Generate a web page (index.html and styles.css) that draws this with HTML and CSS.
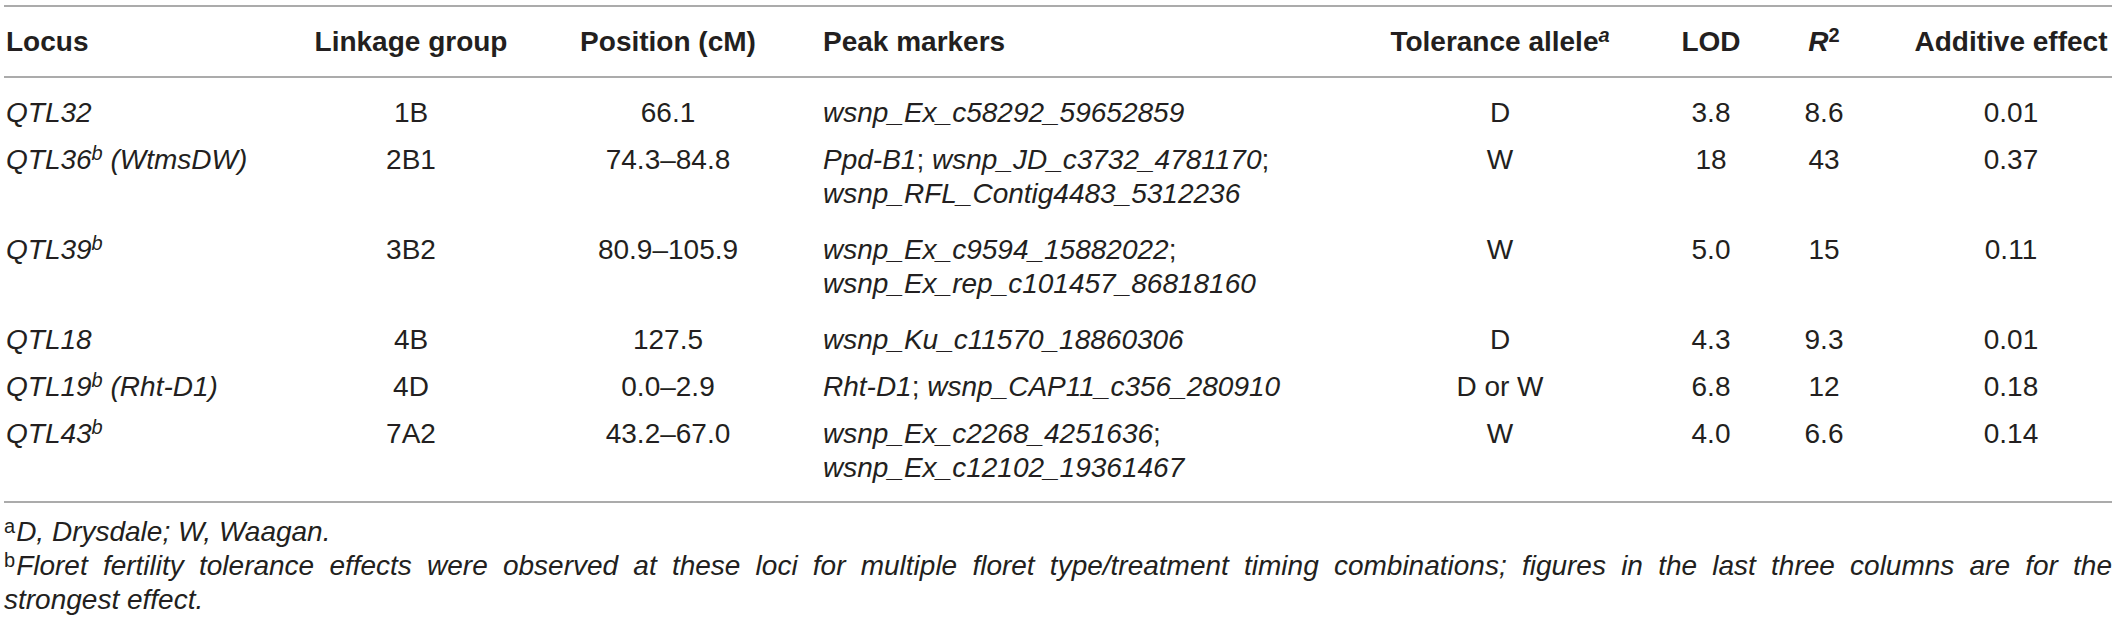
FILE: index.html
```html
<!DOCTYPE html>
<html lang="en">
<head>
<meta charset="utf-8">
<title>QTL table</title>
<link rel="stylesheet" href="styles.css">
</head>
<body>
<div class="page">
  <table class="qtl-table">
    <colgroup>
      <col class="c-locus">
      <col class="c-link">
      <col class="c-pos">
      <col class="c-peak">
      <col class="c-tol">
      <col class="c-lod">
      <col class="c-r2">
      <col class="c-add">
    </colgroup>
    <thead>
      <tr>
        <th class="left">Locus</th>
        <th>Linkage group</th>
        <th>Position (cM)</th>
        <th class="left peak">Peak markers</th>
        <th>Tolerance allele<sup class="sup it">a</sup></th>
        <th class="lod">LOD</th>
        <th class="r2"><span class="it">R</span><sup class="sup">2</sup></th>
        <th>Additive effect</th>
      </tr>
    </thead>
    <tbody>
      <tr>
        <td class="left it">QTL32</td>
        <td>1B</td>
        <td>66.1</td>
        <td class="left peak it">wsnp_Ex_c58292_59652859</td>
        <td>D</td>
        <td class="lod">3.8</td>
        <td class="r2">8.6</td>
        <td>0.01</td>
      </tr>
      <tr class="tall">
        <td class="left it">QTL36<sup class="sup">b</sup> (WtmsDW)</td>
        <td>2B1</td>
        <td>74.3–84.8</td>
        <td class="left peak it">Ppd-B1<span class="up">;</span> wsnp_JD_c3732_4781170<span class="up">;</span> wsnp_RFL_Contig4483_5312236</td>
        <td>W</td>
        <td class="lod">18</td>
        <td class="r2">43</td>
        <td>0.37</td>
      </tr>
      <tr class="tall">
        <td class="left it">QTL39<sup class="sup">b</sup></td>
        <td>3B2</td>
        <td>80.9–105.9</td>
        <td class="left peak it">wsnp_Ex_c9594_15882022<span class="up">;</span> wsnp_Ex_rep_c101457_86818160</td>
        <td>W</td>
        <td class="lod">5.0</td>
        <td class="r2">15</td>
        <td>0.11</td>
      </tr>
      <tr>
        <td class="left it">QTL18</td>
        <td>4B</td>
        <td>127.5</td>
        <td class="left peak it">wsnp_Ku_c11570_18860306</td>
        <td>D</td>
        <td class="lod">4.3</td>
        <td class="r2">9.3</td>
        <td>0.01</td>
      </tr>
      <tr>
        <td class="left it">QTL19<sup class="sup">b</sup> (Rht-D1)</td>
        <td>4D</td>
        <td>0.0–2.9</td>
        <td class="left peak it">Rht-D1<span class="up">;</span> wsnp_CAP11_c356_280910</td>
        <td>D or W</td>
        <td class="lod">6.8</td>
        <td class="r2">12</td>
        <td>0.18</td>
      </tr>
      <tr class="tall">
        <td class="left it">QTL43<sup class="sup">b</sup></td>
        <td>7A2</td>
        <td>43.2–67.0</td>
        <td class="left peak it">wsnp_Ex_c2268_4251636<span class="up">;</span> wsnp_Ex_c12102_19361467</td>
        <td>W</td>
        <td class="lod">4.0</td>
        <td class="r2">6.6</td>
        <td>0.14</td>
      </tr>
    </tbody>
  </table>
  <div class="notes">
    <p class="note"><sup class="note-mark">a</sup><span class="it">D, Drysdale; W, Waagan.</span></p>
    <p class="note"><span class="note-line"><sup class="note-mark">b</sup><span class="it">Floret fertility tolerance effects were observed at these loci for multiple floret type/treatment timing combinations; figures in the last three columns are for the</span></span><span class="it">strongest effect.</span></p>
  </div>
</div>
</body>
</html>
```
FILE: styles.css
```css
html, body {
  margin: 0;
  padding: 0;
  background: #ffffff;
}

body {
  font-family: "Liberation Sans", Arial, Helvetica, sans-serif;
  color: #231f20;
}

.page {
  padding: 5px 5px 0 4px;
  width: 2108px;
}

.qtl-table {
  width: 2108px;
  table-layout: fixed;
  border-collapse: separate;
  border-spacing: 0;
  border-top: 2px solid #ababab;
  border-bottom: 2px solid #ababab;
  font-size: 28px;
  line-height: 34px;
}

.c-locus { width: 296px; }
.c-link  { width: 222px; }
.c-pos   { width: 292px; }
.c-peak  { width: 546px; }
.c-tol   { width: 280px; }
.c-lod   { width: 130px; }
.c-r2    { width: 140px; }
.c-add   { width: 202px; }

.qtl-table th,
.qtl-table td {
  padding: 6px 0 7px;
  text-align: center;
  vertical-align: top;
}

.qtl-table th {
  font-weight: 700;
  padding-top: 18px;
  padding-bottom: 17px;
  border-bottom: 2px solid #ababab;
  white-space: nowrap;
}

.qtl-table td {
  font-weight: 400;
}

.qtl-table tbody tr:first-child td {
  padding-top: 18px;
}

.qtl-table tbody tr.tall td {
  padding-bottom: 16px;
}

.qtl-table .left {
  text-align: left;
  padding-left: 2px;
}

.qtl-table .peak {
  padding-left: 9px;
  padding-right: 6px;
}

.qtl-table .lod {
  padding-left: 12px;
}

.qtl-table .r2 {
  padding-right: 32px;
}

.it {
  font-style: italic;
}

.up {
  font-style: normal;
}

.sup {
  font-size: 20px;
  line-height: 0;
  vertical-align: 9px;
}

.notes {
  margin-top: 12px;
  font-size: 28px;
  line-height: 34px;
}

.note {
  margin: 0;
}

.note-line {
  display: block;
  text-align: justify;
  text-align-last: justify;
}

.note-mark {
  font-size: 20px;
  line-height: 0;
  vertical-align: 8px;
  font-style: normal;
  margin-right: 1px;
}
```
